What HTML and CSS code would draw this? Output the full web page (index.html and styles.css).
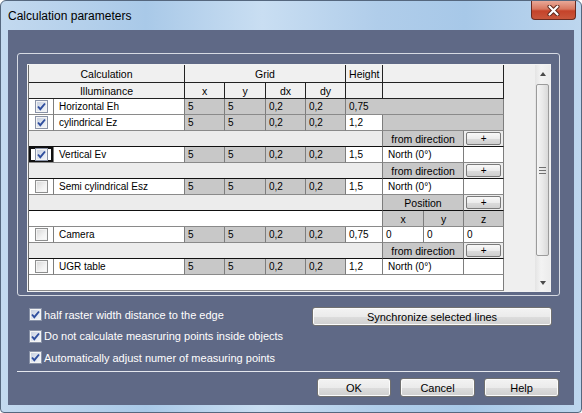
FILE: index.html
```html
<!DOCTYPE html>
<html>
<head>
    <link rel="stylesheet" href="styles.css">
</head>
<body>
    <div class="window">
        <div class="titlebar">
            <span class="title">Calculation parameters</span>
            <div class="close">
                <svg width="13" height="11" viewBox="0 0 13 11">
                    <path d="M2.5 1.5 10.5 9.5 M10.5 1.5 2.5 9.5" stroke="#5a2418" stroke-width="4" stroke-linecap="round"/>
                    <path d="M2.5 1.5 10.5 9.5 M10.5 1.5 2.5 9.5" stroke="#fff" stroke-width="2.2" stroke-linecap="round"/>
                </svg>
            </div>
        </div>

        <div class="client">
            <div class="group">
                <div class="grid-frame">
                    <div class="grid-view">
                        <table class="grid">
                            <colgroup>
                                <col style="width:25px"><col style="width:131px">
                                <col style="width:40px"><col style="width:41px">
                                <col style="width:40px"><col style="width:40px">
                                <col style="width:37px"><col style="width:41px">
                                <col style="width:40px"><col style="width:40px">
                            </colgroup>
                            <tr class="head head1">
                                <td colspan="2">Calculation</td>
                                <td colspan="4">Grid</td>
                                <td>Height</td>
                                <td colspan="3"></td>
                            </tr>
                            <tr class="head">
                                <td colspan="2">Illuminance</td>
                                <td>x</td><td>y</td><td>dx</td><td>dy</td>
                                <td></td>
                                <td colspan="3"></td>
                            </tr>
                            <tr>
                                <td class="w chk"><span class="cb on"><svg viewBox="0 0 11 11"><path d="M2 5.5 4.3 8.2 9 2.5"/></svg></span></td>
                                <td class="w name">Horizontal Eh</td>
                                <td class="g">5</td><td class="g">5</td><td class="g">0,2</td><td class="g">0,2</td>
                                <td class="g" colspan="4">0,75</td>
                            </tr>
                            <tr>
                                <td class="w chk"><span class="cb on"><svg viewBox="0 0 11 11"><path d="M2 5.5 4.3 8.2 9 2.5"/></svg></span></td>
                                <td class="w name">cylindrical Ez</td>
                                <td class="g">5</td><td class="g">5</td><td class="g">0,2</td><td class="g">0,2</td>
                                <td class="w">1,2</td>
                                <td class="g" colspan="3"></td>
                            </tr>
                            <tr class="sub">
                                <td class="l" colspan="7"></td>
                                <td class="lbl" colspan="2">from direction</td>
                                <td class="l btn-cell"><span class="mini">+</span></td>
                            </tr>
                            <tr>
                                <td class="w chk focus"><span class="cb on"><svg viewBox="0 0 11 11"><path d="M2 5.5 4.3 8.2 9 2.5"/></svg></span></td>
                                <td class="w name">Vertical Ev</td>
                                <td class="g">5</td><td class="g">5</td><td class="g">0,2</td><td class="g">0,2</td>
                                <td class="w">1,5</td>
                                <td class="w name" colspan="2">North (0°)</td>
                                <td class="w"></td>
                            </tr>
                            <tr class="sub">
                                <td class="l" colspan="7"></td>
                                <td class="lbl" colspan="2">from direction</td>
                                <td class="l btn-cell"><span class="mini">+</span></td>
                            </tr>
                            <tr>
                                <td class="w chk"><span class="cb"></span></td>
                                <td class="w name">Semi cylindrical Esz</td>
                                <td class="g">5</td><td class="g">5</td><td class="g">0,2</td><td class="g">0,2</td>
                                <td class="w">1,5</td>
                                <td class="w name" colspan="2">North (0°)</td>
                                <td class="w"></td>
                            </tr>
                            <tr class="sub">
                                <td class="l" colspan="7"></td>
                                <td class="lbl" colspan="2">Position</td>
                                <td class="l btn-cell"><span class="mini">+</span></td>
                            </tr>
                            <tr class="xyz">
                                <td class="w" colspan="7"></td>
                                <td class="lbl">x</td><td class="lbl">y</td><td class="lbl">z</td>
                            </tr>
                            <tr>
                                <td class="w chk"><span class="cb"></span></td>
                                <td class="w name">Camera</td>
                                <td class="g">5</td><td class="g">5</td><td class="g">0,2</td><td class="g">0,2</td>
                                <td class="w">0,75</td>
                                <td class="w">0</td><td class="w">0</td><td class="w">0</td>
                            </tr>
                            <tr class="sub">
                                <td class="l" colspan="7"></td>
                                <td class="lbl" colspan="2">from direction</td>
                                <td class="l btn-cell"><span class="mini">+</span></td>
                            </tr>
                            <tr>
                                <td class="w chk"><span class="cb"></span></td>
                                <td class="w name">UGR table</td>
                                <td class="g">5</td><td class="g">5</td><td class="g">0,2</td><td class="g">0,2</td>
                                <td class="w">1,2</td>
                                <td class="w name" colspan="2">North (0°)</td>
                                <td class="w"></td>
                            </tr>
                            <tr>
                                <td class="w" colspan="10"></td>
                            </tr>
                        </table>
                    </div>
                    <div class="scrollbar">
                        <div class="arrow"><span class="tri up"></span></div>
                        <div class="track">
                            <div class="thumb"><span class="grip"></span></div>
                        </div>
                        <div class="arrow"><span class="tri down"></span></div>
                    </div>
                </div>
            </div>

            <div class="options">
                <div class="checks">
                    <label class="opt"><span class="cb on"><svg viewBox="0 0 11 11"><path d="M2 5.5 4.3 8.2 9 2.5"/></svg></span>half raster width distance to the edge</label>
                    <label class="opt"><span class="cb on"><svg viewBox="0 0 11 11"><path d="M2 5.5 4.3 8.2 9 2.5"/></svg></span>Do not calculate measruring points inside objects</label>
                    <label class="opt"><span class="cb on"><svg viewBox="0 0 11 11"><path d="M2 5.5 4.3 8.2 9 2.5"/></svg></span>Automatically adjust numer of measuring points</label>
                </div>
                <button class="btn sync">Synchronize selected lines</button>
            </div>

            <div class="separator"></div>

            <div class="buttons">
                <button class="btn ok">OK</button>
                <button class="btn">Cancel</button>
                <button class="btn">Help</button>
            </div>
        </div>
    </div>
</body>
</html>
```

FILE: styles.css
```css
* {
    margin: 0;
    padding: 0;
    box-sizing: border-box;
}

body {
    width: 582px;
    height: 413px;
    overflow: hidden;
    background: #fff;
    font-family: 'Liberation Sans', Arial, sans-serif;
}

.window {
    width: 582px;
    height: 413px;
    display: flex;
    flex-direction: column;
    padding: 0 7px 7px 7px;
    border: 1px solid #55677e;
    border-radius: 6px 6px 4px 4px;
    background: linear-gradient(90deg, #c3d9ef 0%, #a9c9e8 25%, #c9def2 45%, #b0cdea 65%, #a7c8e8 80%, #bdd6ee 100%);
}

/* title bar */

.titlebar {
    height: 29px;
    display: flex;
    align-items: flex-start;
}

.title {
    padding-top: 8px;
    font-size: 12px;
    color: #000;
}

.close {
    margin-left: auto;
    margin-right: -2px;
    width: 45px;
    height: 19px;
    display: flex;
    align-items: center;
    justify-content: center;
    border: 1px solid #6a2b20;
    border-top: none;
    border-radius: 0 0 4px 4px;
    background: linear-gradient(#e9a897 0%, #d8775f 45%, #c5432a 55%, #c9573c 100%);
}

/* client area */

.client {
    flex: 1;
    display: flex;
    flex-direction: column;
    background: #5f6986;
}

.group {
    margin: 23px 14px 0 9px;
    height: 243px;
    padding: 10px 8px 3px 9px;
    border: 1px solid #d6dae3;
    border-radius: 3px;
}

.grid-frame {
    height: 228px;
    display: flex;
    border: 1px solid #f2f2f2;
    background: #efefef;
}

.grid-view {
    flex: 1;
    overflow: hidden;
}

.grid {
    border-collapse: separate;
    border-spacing: 0;
    table-layout: fixed;
    width: 475px;
    font-size: 10px;
    color: #000;
    border-left: 1px solid #6a6a6a;
}

.grid tr {
    height: 16px;
}

.grid tr.head1 {
    height: 18px;
}

.grid td {
    padding: 0 3px;
    white-space: nowrap;
    overflow: hidden;
    vertical-align: middle;
    border-right: 1px solid #7d7d7d;
    border-bottom: 1px solid #8a8a8a;
}

.grid .head td {
    background: #f0f0f0;
    text-align: center;
    font-size: 10.5px;
    border-right-color: #222;
    border-bottom-color: #222;
}

.grid .w {
    background: #fff;
}

.grid .g {
    background: #c8c8c8;
}

.grid .l {
    background: #ececec;
}

.grid .lbl {
    background: #c8c8c8;
    text-align: center;
    font-size: 10.5px;
}

.grid .sub .l,
.grid .sub .lbl {
    border-bottom-color: #111;
}

.grid .xyz .lbl {
    border-bottom-color: #8a8a8a;
}

.grid .name {
    padding-left: 5px;
}

.grid .chk {
    padding: 0;
    text-align: center;
}

.grid .focus {
    box-shadow: inset 0 0 0 2px #111;
}

.grid .btn-cell {
    padding: 0 2px;
    text-align: center;
}

.mini {
    display: block;
    height: 13px;
    line-height: 11px;
    font-size: 10px;
    border: 1px solid #7a7a7a;
    border-radius: 2px;
    background: linear-gradient(#f8f8f8 0%, #ececec 50%, #dcdcdc 51%, #d0d0d0 100%);
}

/* checkbox */

.cb {
    display: inline-block;
    width: 13px;
    height: 13px;
    vertical-align: middle;
    border: 1px solid #8e8f8f;
    background: linear-gradient(135deg, #d6d6d6 0%, #f2f2f2 60%, #fcfcfc 100%);
    box-shadow: inset 0 0 0 1px #f4f4f4;
}

.cb.on {
    border-color: #8a93a8;
    background: linear-gradient(135deg, #c2cbdd 0%, #e3e8f1 60%, #f6f8fb 100%);
}

.cb svg {
    display: block;
    width: 11px;
    height: 11px;
}

.cb path {
    fill: none;
    stroke: #2f4e9e;
    stroke-width: 1.9;
}

/* scrollbar */

.scrollbar {
    width: 15px;
    display: flex;
    flex-direction: column;
    background: linear-gradient(90deg, #e4e4e4, #f3f3f3 40%, #ececec);
}

.arrow {
    height: 17px;
    display: flex;
    align-items: center;
    justify-content: center;
}

.tri {
    width: 0;
    height: 0;
    border-left: 3.5px solid transparent;
    border-right: 3.5px solid transparent;
}

.tri.up {
    border-bottom: 4px solid #4a4a4a;
}

.tri.down {
    border-top: 4px solid #4a4a4a;
}

.track {
    flex: 1;
    padding: 2px 1px 18px 1px;
}

.thumb {
    height: 100%;
    display: flex;
    align-items: center;
    justify-content: center;
    border: 1px solid #9b9b9b;
    border-radius: 2px;
    background: linear-gradient(90deg, #f5f5f5 0%, #e9e9e9 50%, #d9d9d9 100%);
}

.grip {
    width: 7px;
    height: 7px;
    background: repeating-linear-gradient(#707070 0 1px, transparent 1px 3px);
}

/* options */

.options {
    display: flex;
    justify-content: space-between;
    height: 73px;
    padding: 8px 22px 0 21px;
}

.checks {
    display: flex;
    flex-direction: column;
}

.opt {
    height: 21.5px;
    display: flex;
    align-items: center;
    gap: 2px;
    font-size: 11px;
    color: #fff;
}

.btn {
    height: 19px;
    font-family: 'Liberation Sans', Arial, sans-serif;
    font-size: 11px;
    color: #000;
    border: 1px solid #707070;
    border-radius: 3px;
    background: linear-gradient(#f3f3f3 0%, #ebebeb 50%, #dddddd 51%, #cfcfcf 100%);
    box-shadow: inset 0 0 0 1px #fbfbfb;
}

.sync {
    width: 240px;
    margin-top: 3px;
}

.separator {
    height: 1px;
    margin: 2px 14px 0 9px;
    background: #e4e7ee;
}

.buttons {
    display: flex;
    justify-content: flex-end;
    gap: 9px;
    padding: 6px 15px 0 0;
}

.buttons .btn {
    width: 75px;
}

.buttons .ok {
    width: 74px;
}
```
